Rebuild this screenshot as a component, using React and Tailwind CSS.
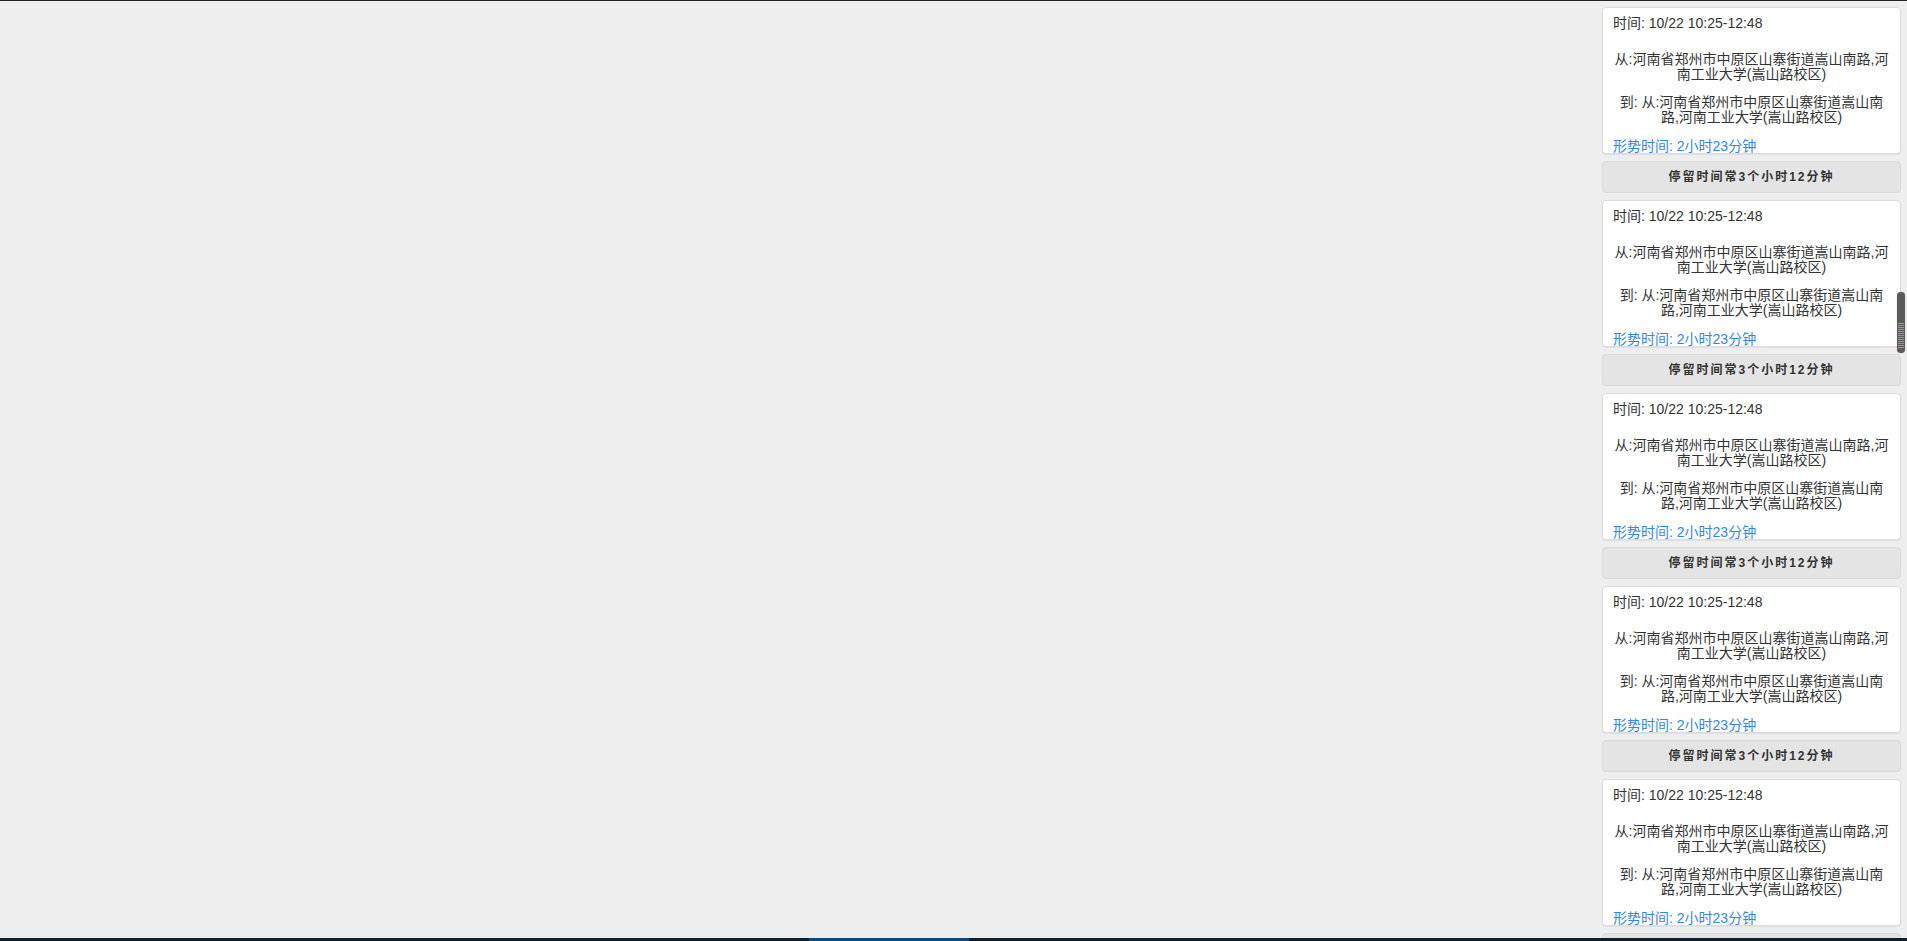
import React from 'react';

const FONT = { fontFamily: '"Liberation Sans", Arial, "Noto Sans CJK SC", sans-serif' };

const trips = [1, 2, 3, 4, 5];

const TripCard = () => (
  <div className="h-[147px] shrink-0 overflow-hidden rounded-[4px] border border-[#dcdcdc] bg-white px-[10px] pt-[8px] text-[14px] text-[#333] shadow-[0_1px_1px_rgba(0,0,0,0.06)]">
    <div className="leading-[15px]">时间: 10/22 10:25-12:48</div>
    <p className="mt-[21px] text-center leading-[15px]">从:河南省郑州市中原区山寨街道嵩山南路,河南工业大学(嵩山路校区)</p>
    <p className="mt-[13px] text-center leading-[15px]">到: 从:河南省郑州市中原区山寨街道嵩山南路,河南工业大学(嵩山路校区)</p>
    <div className="mt-[14px] leading-[14px] text-[#2f86f6]">形势时间: 2小时23分钟</div>
  </div>
);

const StayBar = () => (
  <div className="flex h-[32px] shrink-0 items-center justify-center rounded-[4px] border border-[#dadada] bg-[#e4e4e4] text-[12px] font-bold tracking-[2px] text-[#333]">
    停留时间常3个小时12分钟
  </div>
);

export default function App() {
  return (
    <div className="flex h-screen w-full flex-col overflow-hidden border-t border-[#222] bg-[#eee]" style={FONT}>
      <div className="relative flex flex-1 justify-end overflow-hidden pr-[6px] pt-[6px]">
        <div className="flex w-[299px] flex-col gap-[7px]">
          {trips.map((t) => (
            <React.Fragment key={t}>
              <TripCard />
              <StayBar />
            </React.Fragment>
          ))}
        </div>

        {/* scrollbar thumb */}
        <div className="absolute left-[1897px] top-[291px] flex h-[61px] w-[8px] flex-col overflow-hidden rounded-full bg-[#5b5b5b] shadow-[0_0_1px_rgba(0,0,0,0.4)]">
          <div className="h-[31px]" />
          <div className="mx-auto h-[26px] w-[6px] bg-[repeating-linear-gradient(to_bottom,#3fcf4a_0px,#3fcf4a_1px,#5b5b5b_1px,#5b5b5b_2px)]" />
        </div>
      </div>

      <div className="flex h-[3px] shrink-0 bg-[#0d1f2c]">
        <div className="ml-[809px] w-[160px] bg-[#0b4a7a]" />
      </div>
    </div>
  );
}
